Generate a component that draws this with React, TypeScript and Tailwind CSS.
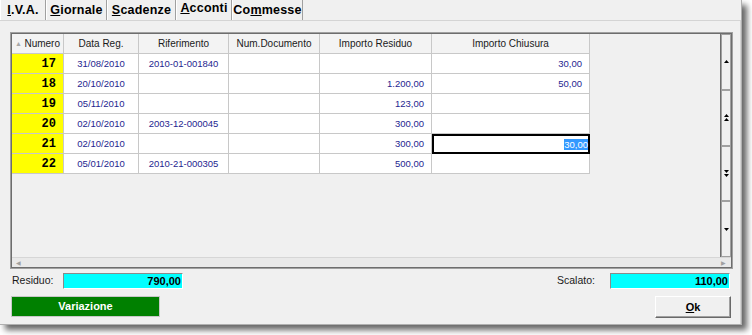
import React from "react";

type Row = { n: number; d: string; r: string; doc: string; res: string; ch: string; sel?: boolean };

const rows: Row[] = [
  { n: 17, d: "31/08/2010", r: "2010-01-001840", doc: "", res: "", ch: "30,00" },
  { n: 18, d: "20/10/2010", r: "", doc: "", res: "1.200,00", ch: "50,00" },
  { n: 19, d: "05/11/2010", r: "", doc: "", res: "123,00", ch: "" },
  { n: 20, d: "02/10/2010", r: "2003-12-000045", doc: "", res: "300,00", ch: "" },
  { n: 21, d: "02/10/2010", r: "", doc: "", res: "300,00", ch: "30,00", sel: true },
  { n: 22, d: "05/01/2010", r: "2010-21-000305", doc: "", res: "500,00", ch: "" },
];

function Tab({ w, pre, u, post, selected }: { w: string; pre: string; u: string; post: string; selected?: boolean }) {
  return (
    <div
      className={`${w} h-[20px] flex justify-center border-r border-[#a0a0a0] border-l border-l-white ${
        selected ? "pt-[1px]" : "pt-[3px]"
      }`}
    >
      <span className="text-[12.5px] font-bold text-black leading-[15px] tracking-[0.2px]">
        {pre}
        <span className="underline">{u}</span>
        {post}
      </span>
    </div>
  );
}

function Tri({ dir }: { dir: "up" | "down" }) {
  return (
    <svg width="5" height="3" viewBox="0 0 5 3">
      {dir === "up" ? <polygon points="2.5,0 5,3 0,3" fill="#000" /> : <polygon points="0,0 5,0 2.5,3" fill="#000" />}
    </svg>
  );
}

function ScrollBtn({ kind }: { kind: "up" | "uu" | "dd" | "down" }) {
  return (
    <div className="flex-1 border border-[#a0a0a0] bg-[#f0f0f0] flex flex-col items-center justify-center gap-[1px]">
      {kind === "up" && <Tri dir="up" />}
      {kind === "uu" && (
        <>
          <Tri dir="up" />
          <Tri dir="up" />
        </>
      )}
      {kind === "dd" && (
        <>
          <Tri dir="down" />
          <Tri dir="down" />
        </>
      )}
      {kind === "down" && <Tri dir="down" />}
    </div>
  );
}

const cellTxt = "text-[9.5px] text-[#25258f] leading-none";

export default function App() {
  return (
    <div className="w-[752px] h-[335px] bg-white font-['Liberation_Sans',Arial,sans-serif]">
      <div className="w-[742px] h-[325px] bg-[#f0f0f0] flex flex-col border-b border-r border-[#b0b0b0] shadow-[5px_5px_6px_rgba(0,0,0,0.6)]">
        {/* Tabs */}
        <div className="h-[20px] flex">
          <Tab w="w-[46px]" pre="" u="I" post=".V.A." />
          <Tab w="w-[61px]" pre="" u="G" post="iornale" />
          <Tab w="w-[69px]" pre="" u="S" post="cadenze" />
          <Tab w="w-[56px]" pre="" u="A" post="cconti" selected />
          <Tab w="w-[71px]" pre="Co" u="m" post="messe" />
        </div>
        {/* Panel */}
        <div className="flex-1 flex flex-col border-t border-[#d4d4d4] border-r border-r-[#d4d4d4] pl-[10px] pr-[8px] pt-[11px]">
          {/* Grid */}
          <div className="w-[723px] h-[237px] border border-[#a0a0a0] flex">
            <div className="flex-1 border border-[#6d6d6d] flex flex-col">
              <div className="flex-1 flex">
                <div className="flex-1 bg-[#f0f0f0] flex flex-col">
                  {/* header */}
                  <div className="flex h-[20px] text-[10px] text-[#1a1a1a]">
                    <div className="w-[52px] flex items-center justify-between pl-[3px] pr-[3px] border-r border-b border-[#c8c8c8] bg-[#f3f3f3]">
                      <span className="text-[7px] text-[#a8a8a8] leading-none">▲</span>
                      <span>Numero</span>
                    </div>
                    <div className="w-[75px] flex items-center justify-center border-r border-b border-[#c8c8c8] bg-[#f3f3f3]">Data Reg.</div>
                    <div className="w-[90px] flex items-center justify-center border-r border-b border-[#c8c8c8] bg-[#f3f3f3]">Riferimento</div>
                    <div className="w-[91px] flex items-center justify-center border-r border-b border-[#c8c8c8] bg-[#f3f3f3]">Num.Documento</div>
                    <div className="w-[112px] flex items-center justify-center border-r border-b border-[#c8c8c8] bg-[#f3f3f3]">Importo Residuo</div>
                    <div className="w-[158px] flex items-center justify-center border-r border-b border-[#c8c8c8] bg-[#f3f3f3]">Importo Chiusura</div>
                  </div>
                  {rows.map((r) => (
                    <div key={r.n} className="flex h-[20px]">
                      <div className="w-[52px] bg-[#ffff00] border-r border-b border-[#c8c8c8] flex items-center justify-end pr-[7px]">
                        <span className="font-['Liberation_Mono',monospace] font-bold text-[12px] text-black leading-none">{r.n}</span>
                      </div>
                      <div className={`w-[75px] bg-white border-r border-b border-[#c8c8c8] flex items-center justify-center ${cellTxt}`}>{r.d}</div>
                      <div className={`w-[90px] bg-white border-r border-b border-[#c8c8c8] flex items-center justify-center ${cellTxt}`}>{r.r}</div>
                      <div className={`w-[91px] bg-white border-r border-b border-[#c8c8c8] flex items-center justify-center ${cellTxt}`}>{r.doc}</div>
                      <div className={`w-[112px] bg-white border-r border-b border-[#c8c8c8] flex items-center justify-end pr-[7px] ${cellTxt}`}>{r.res}</div>
                      {r.sel ? (
                        <div className="w-[158px] bg-white border-2 border-black flex items-center justify-end pr-[0px]">
                          <span className="bg-[#3399ff] text-white text-[9.5px] leading-[11px] px-[0px]">{r.ch}</span>
                        </div>
                      ) : (
                        <div className={`w-[158px] bg-white border-r border-b border-[#c8c8c8] flex items-center justify-end pr-[7px] ${cellTxt}`}>{r.ch}</div>
                      )}
                    </div>
                  ))}
                </div>
                {/* vertical scroll */}
                <div className="w-[11px] flex flex-col border-l border-[#6d6d6d]">
                  <ScrollBtn kind="up" />
                  <ScrollBtn kind="uu" />
                  <ScrollBtn kind="dd" />
                  <ScrollBtn kind="down" />
                </div>
              </div>
              {/* horizontal scroll */}
              <div className="h-[10px] bg-[#e9e9e9] border-t border-[#d6d6d6] flex items-center justify-between pl-[4px] pr-[5px]">
                <span className="text-[6px] text-[#a0a0a0] leading-none">◀</span>
                <span className="text-[6px] text-[#a0a0a0] leading-none">▶</span>
              </div>
            </div>
          </div>
          {/* totals */}
          <div className="flex items-center h-[16px] mt-[4px] pr-[2px]">
            <span className="w-[53px] pl-[2px] text-[10.5px] text-[#1a1a1a]">Residuo:</span>
            <div className="w-[120px] h-[16px] bg-[#00ffff] border-t border-l border-[#8a8a8a] border-r border-b border-r-white border-b-white flex items-center justify-end pr-[1px]">
              <span className="text-[11px] font-bold text-black leading-none">790,00</span>
            </div>
            <div className="flex-1" />
            <span className="w-[53px] text-[10.5px] text-[#1a1a1a]">Scalato:</span>
            <div className="w-[120px] h-[16px] bg-[#00ffff] border-t border-l border-[#8a8a8a] border-r border-b border-r-white border-b-white flex items-center justify-end pr-[1px]">
              <span className="text-[11px] font-bold text-black leading-none">110,00</span>
            </div>
          </div>
          {/* buttons */}
          <div className="flex items-start justify-between mt-[7px] pl-[1px] pr-[1px]">
            <div className="w-[149px] h-[21px] bg-[#008000] border border-[#c8c8c8] flex items-center justify-center">
              <span className="text-[11px] font-bold text-white">Variazione</span>
            </div>
            <div className="w-[76px] h-[22px] bg-[#f0f0f0] border border-t-white border-l-white border-r-[#696969] border-b-[#696969] shadow-[inset_-1px_-1px_0_#a0a0a0] flex items-center justify-center">
              <span className="text-[11px] font-bold text-black">
                <span className="underline">O</span>k
              </span>
            </div>
          </div>
        </div>
      </div>
    </div>
  );
}
